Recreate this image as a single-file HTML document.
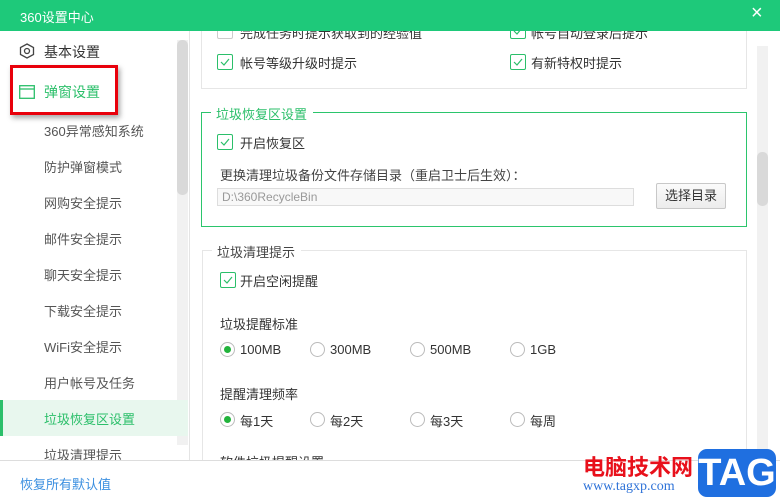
<!DOCTYPE html>
<html><head><meta charset="utf-8"><style>
*{margin:0;padding:0;box-sizing:border-box}
body{width:780px;height:500px;overflow:hidden;background:#fff;font-family:"Liberation Sans","Noto Sans CJK SC",sans-serif;font-size:13px;color:#333;position:relative}
.a{position:absolute;white-space:nowrap}
.cb{position:absolute;width:16px;height:16px;border:1px solid #2bbf6a;border-radius:2px;background:#fff}
.cb svg{position:absolute;left:2px;top:3px}
.cb.off{border-color:#ccc}
.rd{position:absolute;width:15px;height:15px;border:1px solid #bbb;border-radius:50%;background:#fff}
.rd.on:after{content:"";position:absolute;left:3px;top:3px;width:7px;height:7px;border-radius:50%;background:#22b33c}
.si{position:absolute;left:44px;color:#555;font-size:13px}
</style></head><body>

<!-- sidebar -->
<div class="a" style="left:189px;top:31px;width:1px;height:430px;background:#e4e4e4"></div>
<div class="a" style="left:177px;top:40px;width:11px;height:405px;background:#f1f1f1"></div>
<div class="a" style="left:177px;top:40px;width:11px;height:155px;background:#d9d9d9;border-radius:5px"></div>
<svg class="a" style="left:19px;top:43px" width="16" height="16"><polygon points="8,1 14.5,4.5 14.5,11.5 8,15 1.5,11.5 1.5,4.5" fill="none" stroke="#444" stroke-width="1.3"/><circle cx="8" cy="8" r="2.5" fill="none" stroke="#444" stroke-width="1.3"/></svg>
<div class="a" style="left:44px;top:42px;font-size:14px;color:#333">基本设置</div>
<svg class="a" style="left:19px;top:85px" width="16" height="14"><rect x="0.7" y="0.7" width="14.6" height="12.6" fill="none" stroke="#2bbf6a" stroke-width="1.3"/><line x1="1" y1="4" x2="15" y2="4" stroke="#2bbf6a" stroke-width="1.3"/></svg>
<div class="a" style="left:44px;top:82px;font-size:14px;color:#2bbf6a">弹窗设置</div>
<div class="a" style="left:10px;top:65px;width:108px;height:50px;border:3px solid #e8000b;box-shadow:2px 3px 5px rgba(0,0,0,.35)"></div>
<div class="si" style="top:121px">360异常感知系统</div>
<div class="si" style="top:157px">防护弹窗模式</div>
<div class="si" style="top:193px">网购安全提示</div>
<div class="si" style="top:229px">邮件安全提示</div>
<div class="si" style="top:265px">聊天安全提示</div>
<div class="si" style="top:301px">下载安全提示</div>
<div class="si" style="top:337px">WiFi安全提示</div>
<div class="si" style="top:373px">用户帐号及任务</div>
<div class="a" style="left:0;top:400px;width:188px;height:36px;background:#e8f7ee"></div>
<div class="a" style="left:0;top:400px;width:3px;height:36px;background:#2bbf6a"></div>
<div class="si" style="top:409px;color:#2bbf6a">垃圾恢复区设置</div>
<div class="si" style="top:445px">垃圾清理提示</div>

<!-- right scrollbar -->
<div class="a" style="left:757px;top:46px;width:11px;height:414px;background:#f1f1f1"></div>
<div class="a" style="left:757px;top:152px;width:11px;height:54px;background:#d9d9d9;border-radius:5px"></div>

<!-- top box -->
<div class="a" style="left:201px;top:20px;width:546px;height:69px;border:1px solid #e6e6e6;border-top:none"></div>
<div class="cb off" style="left:217px;top:23px"></div>
<div class="a" style="left:240px;top:23px;color:#333">完成任务时提示获取到的经验值</div>
<div class="cb" style="left:510px;top:23px"><svg width="10" height="8"><path d="M1 4 L4 7 L9 1" fill="none" stroke="#2bbf6a" stroke-width="1.2"/></svg></div>
<div class="a" style="left:531px;top:23px">帐号自动登录后提示</div>
<div class="a" style="left:0;top:0;width:780px;height:31px;background:#1ec97a"></div>
<div class="a" style="left:20px;top:7px;color:#fff;font-size:13px">360设置中心</div>
<div class="a" style="left:751px;top:2px;color:#fff;font-size:20px">×</div>
<div class="cb" style="left:217px;top:54px"><svg width="10" height="8"><path d="M1 4 L4 7 L9 1" fill="none" stroke="#2bbf6a" stroke-width="1.2"/></svg></div>
<div class="a" style="left:240px;top:53px">帐号等级升级时提示</div>
<div class="cb" style="left:510px;top:54px"><svg width="10" height="8"><path d="M1 4 L4 7 L9 1" fill="none" stroke="#2bbf6a" stroke-width="1.2"/></svg></div>
<div class="a" style="left:531px;top:53px">有新特权时提示</div>

<!-- green fieldset -->
<div class="a" style="left:201px;top:112px;width:546px;height:115px;border:1px solid #2bc56c"></div>
<div class="a" style="left:211px;top:104px;background:#fff;padding:0 6px 0 5px;color:#2bbf6a;font-size:13px">垃圾恢复区设置</div>
<div class="cb" style="left:217px;top:134px"><svg width="10" height="8"><path d="M1 4 L4 7 L9 1" fill="none" stroke="#2bbf6a" stroke-width="1.2"/></svg></div>
<div class="a" style="left:240px;top:133px">开启恢复区</div>
<div class="a" style="left:220px;top:165px;color:#444">更换清理垃圾备份文件存储目录（重启卫士后生效）：</div>
<div class="a" style="left:217px;top:188px;width:417px;height:18px;border:1px solid #ddd;background:#f8f8f8;color:#999;font-size:12px;padding:1px 4px">D:\360RecycleBin</div>
<div class="a" style="left:656px;top:183px;width:70px;height:26px;border:1px solid #c8c8c8;border-radius:2px;background:linear-gradient(#fbfbfb,#ececec);text-align:center;line-height:24px">选择目录</div>

<!-- gray fieldset -->
<div class="a" style="left:202px;top:250px;width:545px;height:220px;border:1px solid #e6e6e6"></div>
<div class="a" style="left:212px;top:242px;background:#fff;padding:0 6px 0 5px;color:#444">垃圾清理提示</div>
<div class="cb" style="left:220px;top:272px"><svg width="10" height="8"><path d="M1 4 L4 7 L9 1" fill="none" stroke="#2bbf6a" stroke-width="1.2"/></svg></div>
<div class="a" style="left:240px;top:271px">开启空闲提醒</div>
<div class="a" style="left:220px;top:314px">垃圾提醒标准</div>
<div class="rd on" style="left:220px;top:342px"></div><div class="a" style="left:240px;top:342px">100MB</div>
<div class="rd" style="left:310px;top:342px"></div><div class="a" style="left:330px;top:342px">300MB</div>
<div class="rd" style="left:410px;top:342px"></div><div class="a" style="left:430px;top:342px">500MB</div>
<div class="rd" style="left:510px;top:342px"></div><div class="a" style="left:530px;top:342px">1GB</div>
<div class="a" style="left:220px;top:384px">提醒清理频率</div>
<div class="rd on" style="left:220px;top:412px"></div><div class="a" style="left:240px;top:411px">每1天</div>
<div class="rd" style="left:310px;top:412px"></div><div class="a" style="left:330px;top:411px">每2天</div>
<div class="rd" style="left:410px;top:412px"></div><div class="a" style="left:430px;top:411px">每3天</div>
<div class="rd" style="left:510px;top:412px"></div><div class="a" style="left:530px;top:411px">每周</div>
<div class="a" style="left:220px;top:452px">软件垃圾提醒设置</div>

<!-- bottom -->
<div class="a" style="left:0;top:460px;width:780px;height:40px;background:#fff;border-top:1px solid #ddd"></div>
<div class="a" style="left:20px;top:474px;color:#3b8fe0;font-size:13px">恢复所有默认值</div>
<div class="a" style="left:583px;top:450px;color:#e8101b;font-size:22px;font-weight:bold">电脑技术网</div>
<div class="a" style="left:583px;top:479px;color:#2f73d8;font-size:14px;font-family:'Liberation Serif',serif">www.tagxp.com</div>
<div class="a" style="left:698px;top:449px;width:78px;height:48px;background:#1f6fe0;border-radius:9px;color:#fff;font-size:38px;font-weight:bold;text-align:center;line-height:48px">TAG</div>
</body></html>
